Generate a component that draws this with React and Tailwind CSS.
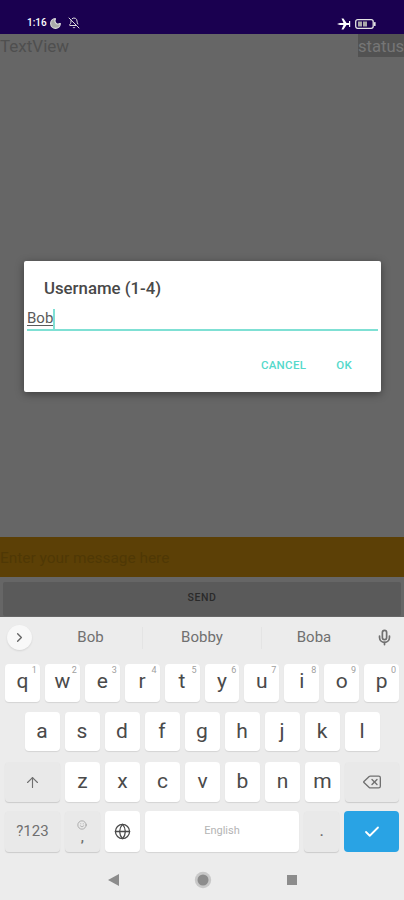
import React from "react";
import { ArrowUp, BellOff, Check, ChevronRight, Delete, Globe, Mic, Moon, Smile } from "lucide-react";

const row1 = [
  ["q", "1"],
  ["w", "2"],
  ["e", "3"],
  ["r", "4"],
  ["t", "5"],
  ["y", "6"],
  ["u", "7"],
  ["i", "8"],
  ["o", "9"],
  ["p", "0"],
];
const row2 = ["a", "s", "d", "f", "g", "h", "j", "k", "l"];
const row3 = ["z", "x", "c", "v", "b", "n", "m"];

const Key = ({ children, hint, className = "" }) => (
  <div
    className={
      "relative flex h-[39px] items-center justify-center rounded-[4px] bg-white text-[21px] text-[#4a4a4a] shadow-[0_1px_1px_rgba(0,0,0,0.1)] " +
      className
    }
  >
    {children}
    {hint && (
      <span className="absolute right-[3px] top-[1px] text-[9px] leading-[11px] text-[#a0a0a0]">
        {hint}
      </span>
    )}
  </div>
);

const GrayKey = ({ children, className = "" }) => (
  <div
    className={
      "flex h-[41px] items-center justify-center rounded-[4px] bg-[#e9e9e9] text-[#707070] shadow-[0_1px_1px_rgba(0,0,0,0.14)] " +
      className
    }
  >
    {children}
  </div>
);

const App = () => {
  return (
    <div
      className="relative flex h-[900px] w-[404px] flex-col overflow-hidden bg-[#ececec]"
      style={{ fontFamily: "Roboto, sans-serif" }}
    >
      {/* status bar */}
      <div className="flex h-[34px] items-end justify-between bg-[#1a0050] pb-[4px] pl-[27px] pr-[28px] text-white">
        <div className="flex items-center gap-[2px]">
          <span className="text-[10px] font-medium leading-[14px]">1:16</span>
          <Moon size={13} strokeWidth={2} className="fill-[#aaa] text-[#ddd]" />
          <BellOff size={12} strokeWidth={2} className="ml-[4px] text-[#ddd]" />
        </div>
        <div className="flex items-center gap-[4px]">
          <svg width="14" height="12" viewBox="0 0 14 12" fill="#fff">
            <path d="M0 6 L3 5 L6.5 5 L4.5 .5 L6.5 .5 L9.5 5 L12 5 L12 3 L13.2 3 L13.2 9 L12 9 L12 7 L9.5 7 L6.5 11.5 L4.5 11.5 L6.5 7 L3 7 Z" />
          </svg>
          <svg width="21" height="10" viewBox="0 0 21 10" fill="none">
            <rect x=".7" y=".7" width="17.5" height="8.6" rx="2" stroke="#e4e4e4" strokeWidth="1.3" />
            <rect x="3" y="2.5" width="4" height="5" fill="#aaa" />
            <rect x="8" y="2.5" width="4" height="5" fill="#aaa" />
            <rect x="19" y="3" width="1.6" height="4" rx=".6" fill="#e4e4e4" />
          </svg>
        </div>
      </div>

      {/* dimmed app content */}
      <div className="flex h-[583px] flex-col bg-[#666666]">
        <div className="flex h-[23px] items-start justify-between">
          <span className="pt-[2px] text-[17px] leading-[21px] text-[#4f4f4f]">TextView</span>
          <span className="h-[23px] w-[46px] whitespace-nowrap bg-[#525252] pt-[2px] text-[16.6px] leading-[21px] text-[#767676]">
            status
          </span>
        </div>
        <div className="flex-1" />
        <div className="flex h-[40px] items-center bg-[#5c4006] pt-[3px] text-[15.4px] text-[#4f3805]">
          Enter your message here
        </div>
        <div className="mx-[3px] mt-[5px] flex h-[34px] items-center justify-center rounded-[2px] bg-[#5a5a5a] pb-[3px] text-[10.5px] font-medium tracking-[0.6px] text-[#2a2a2a]">
          SEND
        </div>
        <div className="h-[1px]" />
      </div>

      {/* dialog */}
      <div className="absolute left-[24px] top-[261px] h-[131px] w-[357px] rounded-[2px] bg-white shadow-[0_2px_8px_rgba(0,0,0,0.4)]">
        <div className="pl-[20px] pt-[17px] text-[16.8px] font-medium leading-[20px] text-[#484848]">
          Username (1-4)
        </div>
        <div className="mx-[3px] mt-[10px] flex h-[23px] items-center border-b-2 border-[#7fe0d4] text-[15px] text-[#5a5a5a]">
          <span className="underline underline-offset-2">Bob</span>
          <span className="h-[20px] w-[2px] bg-[#7fe0d4]" />
        </div>
        <div className="flex justify-end gap-[30px] pr-[29px] pt-[26px] text-[11.5px] font-medium tracking-[0.3px] text-[#55d9cb]">
          <span>CANCEL</span>
          <span>OK</span>
        </div>
      </div>

      {/* suggestions */}
      <div className="flex h-[43px] items-center pb-[2px] text-[15px] text-[#707070]">
        <div className="ml-[7px] flex h-[25px] w-[25px] items-center justify-center rounded-full bg-[#f8f8f8] shadow-[0_1px_2px_rgba(0,0,0,0.1)]">
          <ChevronRight size={15} strokeWidth={2.2} className="text-[#666]" />
        </div>
        <div className="ml-[7px] flex w-[103px] justify-center">Bob</div>
        <div className="h-[22px] w-px bg-[#e4e4e4]" />
        <div className="flex w-[118px] justify-center">Bobby</div>
        <div className="h-[22px] w-px bg-[#e4e4e4]" />
        <div className="flex w-[104px] justify-center">Boba</div>
        <Mic size={17} strokeWidth={2.4} className="ml-[10px] text-[#707070]" />
      </div>

      {/* keys */}
      <div className="mt-[4px] flex flex-col px-[5px]">
        <div className="grid grid-cols-10 gap-[5px]">
          {row1.map(([k, n]) => (
            <Key key={k} hint={n} className="!h-[38px] pb-[3px]">
              {k}
            </Key>
          ))}
        </div>
        <div className="mt-[10px] flex justify-center gap-[5px]">
          {row2.map((k) => (
            <Key key={k} className="w-[35px]">
              {k}
            </Key>
          ))}
        </div>
        <div className="mt-[11px] flex gap-[5px]">
          <GrayKey className="!h-[40px] w-[55px]">
            <ArrowUp size={17} strokeWidth={1.6} />
          </GrayKey>
          {row3.map((k) => (
            <Key key={k} className="!h-[40px] w-[35px]">
              {k}
            </Key>
          ))}
          <GrayKey className="!h-[40px] w-[54px]">
            <Delete size={20} strokeWidth={1.6} />
          </GrayKey>
        </div>
        <div className="mt-[9px] flex gap-[5px]">
          <GrayKey className="w-[55px] text-[15px]">?123</GrayKey>
          <GrayKey className="w-[35px] flex-col gap-[3px] text-[13px] font-bold leading-[10px]">
            <Smile size={10} strokeWidth={1.8} className="text-[#999]" />
            <span>,</span>
          </GrayKey>
          <Key className="!h-[41px] w-[35px]">
            <Globe size={17} strokeWidth={1.8} className="text-[#4a4a4a]" />
          </Key>
          <Key className="!h-[41px] w-[155px] !text-[11px] !text-[#b4b4b4]">English</Key>
          <GrayKey className="w-[35px] text-[13px] font-bold">.</GrayKey>
          <div className="flex h-[41px] w-[55px] items-center justify-center rounded-[4px] bg-[#29a3e4]">
            <Check size={18} strokeWidth={2.4} className="text-white" />
          </div>
        </div>
      </div>

      {/* nav bar */}
      <div className="flex flex-1 items-center justify-center gap-[75px] pt-[8px]">
        <svg width="11" height="12" viewBox="0 0 11 12" fill="#8c8c8c">
          <path d="M11 0 V12 L0 6 Z" />
        </svg>
        <svg width="18" height="18" viewBox="0 0 18 18">
          <circle cx="9" cy="9" r="8.2" fill="#c8c8c8" />
          <circle cx="9" cy="9" r="5.5" fill="#8c8c8c" />
        </svg>
        <div className="h-[10px] w-[10px] bg-[#8c8c8c]" />
      </div>
    </div>
  );
};

export default App;
